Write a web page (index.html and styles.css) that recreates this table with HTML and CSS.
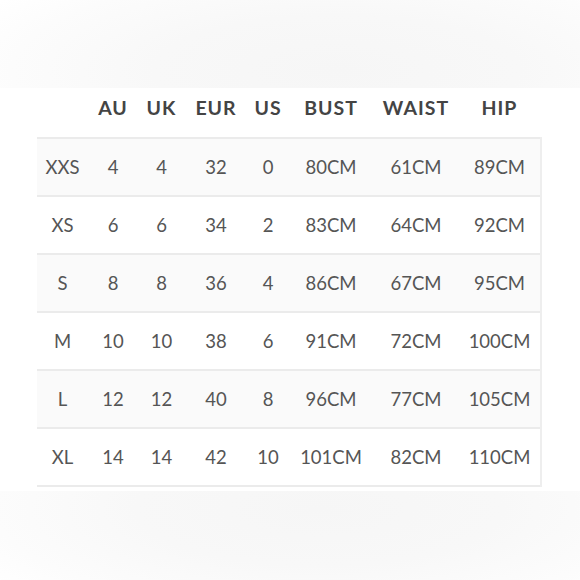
FILE: index.html
```html
<!DOCTYPE html>
<html>
<head>
<meta charset="utf-8">
<link rel="stylesheet" href="styles.css">
</head>
<body>
<div class="band band-top"></div>
<div class="chart">
  <div class="head">
    <span></span><span>AU</span><span>UK</span><span>EUR</span><span>US</span><span>BUST</span><span>WAIST</span><span>HIP</span>
  </div>
  <div class="table">
    <div class="row odd"><span>XXS</span><span>4</span><span>4</span><span>32</span><span>0</span><span>80CM</span><span>61CM</span><span>89CM</span></div>
    <div class="row"><span>XS</span><span>6</span><span>6</span><span>34</span><span>2</span><span>83CM</span><span>64CM</span><span>92CM</span></div>
    <div class="row odd"><span>S</span><span>8</span><span>8</span><span>36</span><span>4</span><span>86CM</span><span>67CM</span><span>95CM</span></div>
    <div class="row"><span>M</span><span>10</span><span>10</span><span>38</span><span>6</span><span>91CM</span><span>72CM</span><span>100CM</span></div>
    <div class="row odd"><span>L</span><span>12</span><span>12</span><span>40</span><span>8</span><span>96CM</span><span>77CM</span><span>105CM</span></div>
    <div class="row last"><span>XL</span><span>14</span><span>14</span><span>42</span><span>10</span><span>101CM</span><span>82CM</span><span>110CM</span></div>
  </div>
</div>
<div class="band band-bottom"></div>
</body>
</html>
```
FILE: styles.css
```css
html, body {
  margin: 0;
  padding: 0;
  background: #ffffff;
}
body {
  width: 580px;
  height: 580px;
  overflow: hidden;
  font-family: Lato, "Open Sans", sans-serif;
  display: flex;
  flex-direction: column;
}
.band {
  flex: none;
}
.band-top {
  height: 88px;
  background: radial-gradient(ellipse 70% 140% at 58% 80%, #f6f6f6 0%, #f8f8f8 45%, #fcfcfc 80%, #ffffff 100%);
}
.band-bottom {
  height: 90px;
  margin-top: 4px;
  background: radial-gradient(ellipse 70% 140% at 55% 20%, #f6f6f6 0%, #f8f8f8 45%, #fcfcfc 80%, #ffffff 100%);
}
.chart {
  margin-left: 37px;
  width: 505px;
}
.head, .row {
  display: grid;
  grid-template-columns: 51px 50px 47px 62px 42px 84px 86px 81px;
  align-items: center;
  text-align: center;
}
.head {
  height: 49px;
  font-weight: 700;
  font-size: 19.5px;
  letter-spacing: 1px;
  color: #444444;
}
.head span {
  padding-bottom: 10px;
}
.table {
  border-right: 2px solid #eeeeee;
}
.row {
  height: 56px;
  border-top: 2px solid #ebebeb;
  font-size: 18.5px;
  color: #555555;
  background: #ffffff;
}
.row.odd {
  background: #fafafa;
}
.row.last {
  border-bottom: 2px solid #ebebeb;
}
```
